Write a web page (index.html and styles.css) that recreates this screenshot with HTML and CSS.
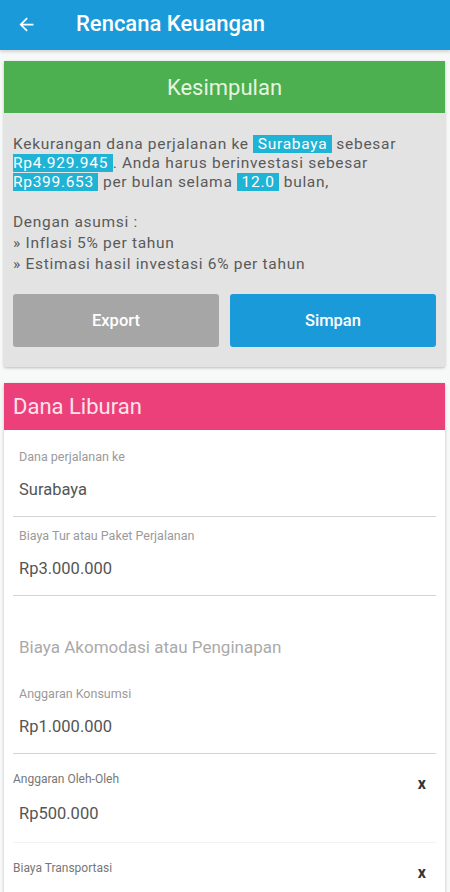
FILE: index.html
```html
<!DOCTYPE html>
<html lang="id">
<head>
  <meta charset="UTF-8" />
  <meta name="viewport" content="width=device-width, initial-scale=1.0"/>
  <title>Rencana Keuangan</title>
  <link rel="stylesheet" href="styles.css">
</head>
<body>

<div class="appbar">
  <svg class="back" width="21" height="21" viewBox="0 0 24 24">
    <path d="M20 11H7.83l5.59-5.59L12 4l-8 8 8 8 1.41-1.41L7.83 13H20v-2z" fill="#fff"/>
  </svg>
  <span class="appbar-title">Rencana Keuangan</span>
</div>

<div class="page">

  <!-- Kesimpulan -->
  <div class="card summary">
    <div class="card-head green">Kesimpulan</div>
    <div class="summary-body">
      <p class="summary-text">
        Kekurangan dana perjalanan ke <span class="hl">&nbsp;Surabaya&nbsp;</span> sebesar
        <span class="hl">Rp4.929.945&nbsp;</span>. Anda harus berinvestasi sebesar
        <span class="hl">Rp399.653&nbsp;</span> per bulan selama <span class="hl">&nbsp;12.0&nbsp;</span> bulan,
      </p>
      <p class="assume">
        Dengan asumsi :<br>
        » Inflasi 5% per tahun<br>
        » Estimasi hasil investasi 6% per tahun
      </p>
      <div class="actions">
        <button class="btn gray">Export</button>
        <button class="btn blue">Simpan</button>
      </div>
    </div>
  </div>

  <!-- Dana Liburan -->
  <div class="card form">
    <div class="card-head pink">Dana Liburan</div>

    <div class="field first">
      <div class="field-label">Dana perjalanan ke</div>
      <div class="field-value">Surabaya</div>
    </div>

    <div class="field">
      <div class="field-label">Biaya Tur atau Paket Perjalanan</div>
      <div class="field-value">Rp3.000.000</div>
    </div>

    <div class="group-title">Biaya Akomodasi atau Penginapan</div>

    <div class="field grouped">
      <div class="field-label">Anggaran Konsumsi</div>
      <div class="field-value">Rp1.000.000</div>
    </div>

    <div class="extra">
      <div class="extra-row">
        <span class="extra-label">Anggaran Oleh-Oleh</span>
        <span class="remove">x</span>
      </div>
      <div class="extra-value">Rp500.000</div>
    </div>

    <div class="extra">
      <div class="extra-row">
        <span class="extra-label">Biaya Transportasi</span>
        <span class="remove">x</span>
      </div>
    </div>
  </div>

</div>

</body>
</html>
```

FILE: styles.css
```css
body {
  font-family: Roboto, 'Noto Sans', sans-serif;
  background: #f7f8f8;
  margin: 0; padding: 0;
}
.appbar {
  height: 50px; background: #1b9ad9;
  display: flex; align-items: center;
  padding-left: 16px;
  box-shadow: 0 2px 3px rgba(0,0,0,0.15);
}
.back { margin-top: -2px; }
.appbar-title {
  color: #fff; font-size: 22px; font-weight: 500;
  margin-left: 39px; margin-top: -4px;
}
.page { padding: 11px 5px 0 4px; }
.card {
  box-shadow: 0 1px 3px rgba(0,0,0,0.25);
  border-radius: 2px;
}
.card-head { font-size: 22px; }
.green {
  background: #4caf50; height: 52px;
  display: flex; align-items: center; justify-content: center;
  color: #e6f5df;
}
.pink {
  background: #ec407a; height: 47px;
  display: flex; align-items: center; padding-left: 9px;
  color: #fbe3ec;
}
.summary { background: #e3e3e3; }
.summary-body { padding: 22px 9px 20px 9px; }
.summary-text, .assume {
  font-size: 15.5px; letter-spacing: 0.7px; color: #5a5a5a;
}
.summary-text { margin: 0; line-height: 19px; }
.hl { background: #1fb3d6; color: #fff; }
.assume { margin: 20px 0 0; line-height: 21px; }
.actions {
  display: flex; gap: 11px; margin-top: 19px;
}
.btn {
  flex: 1; height: 53px; border: none; border-radius: 3px;
  font-family: inherit; font-size: 16.5px; font-weight: 500;
  color: #fff;
}
.btn.gray { background: #a6a6a6; }
.btn.blue { background: #1b9ad9; }
.form {
  margin-top: 16px; background: #fff;
  padding-bottom: 60px;
}
.field {
  margin: 0 9px; padding-top: 11px;
  border-bottom: 1px solid #d4d4d4;
}
.field.first { padding-top: 19px; }
.field.grouped { padding-top: 29px; }
.field-label, .field-value { padding-left: 6px; }
.field-label { font-size: 12.5px; color: #9a9a9a; }
.field-value {
  font-size: 16.5px; color: #555; margin-top: 16px; padding-bottom: 17px;
}
.group-title {
  margin: 41px 0 0 15px; font-size: 17px; color: #aaa;
}
.extra { margin: 0 9px; padding-top: 18px; }
.extra-row {
  display: flex; justify-content: space-between; align-items: flex-start;
}
.extra-label { font-size: 12px; color: #777; }
.remove {
  font-size: 16px; font-weight: 700; color: #333;
  margin: 2px 10px 0 0;
}
.extra-value {
  font-size: 16.5px; color: #555; padding: 11px 0 19px 6px;
  border-bottom: 1px solid #f2f2f2;
}
```
